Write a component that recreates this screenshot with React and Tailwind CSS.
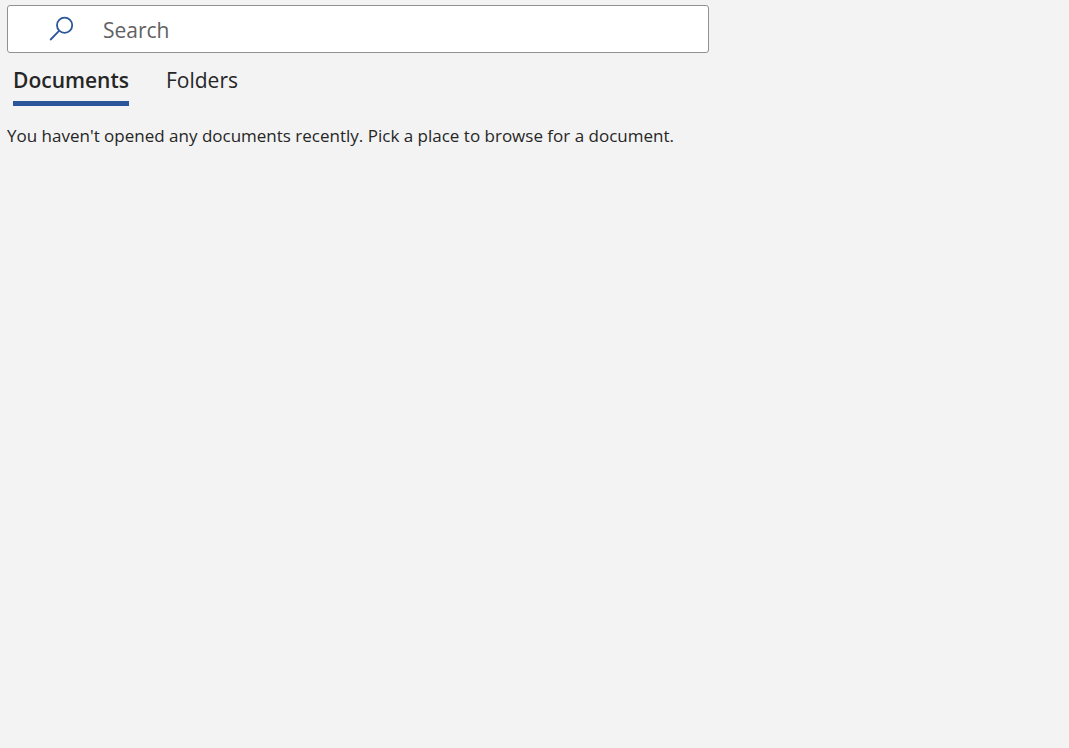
import { useState } from "react";

const tabs = ["Documents", "Folders"];

function SearchIcon() {
  return (
    <svg aria-hidden="true" viewBox="0 0 26 26" className="h-[26px] w-[26px] shrink-0" fill="none" stroke="#2b579a" strokeWidth="1.8">
      <circle cx="15.6" cy="9.2" r="7.6" />
      <path d="M10.3 14.7 1.2 24" />
    </svg>
  );
}

export default function App() {
  const [active, setActive] = useState("Documents");
  return (
    <main className="min-h-screen bg-[#f3f3f3] px-[7px] pt-[5px] font-['Open_Sans','Noto_Sans',sans-serif] text-[#262626]">
      <label className="flex h-12 w-full max-w-[702px] items-center gap-7 rounded-[3px] border border-[#919191] bg-white pr-3 pl-[41px]">
        <SearchIcon />
        <input
          type="search"
          aria-label="Search"
          placeholder="Search"
          className="min-w-0 flex-1 bg-transparent pt-1 text-[21px] outline-none placeholder:text-[#616161]"
        />
      </label>
      <div role="tablist" className="flex gap-[37px] px-[6px] pt-3">
        {tabs.map((tab) => (
          <button
            key={tab}
            type="button"
            role="tab"
            aria-selected={active === tab}
            onClick={() => setActive(tab)}
            className={
              active === tab
                ? "h-[41px] border-b-[5px] border-[#2b579a] pb-[6px] text-[21px] leading-7 font-semibold"
                : "h-[41px] border-b-[5px] border-transparent pb-[6px] text-[21px] leading-7"
            }
          >
            {tab}
          </button>
        ))}
      </div>
      <p className="pt-[18px] text-[17px] leading-6">
        You haven't opened any documents recently. Pick a place to browse for a document.
      </p>
    </main>
  );
}
